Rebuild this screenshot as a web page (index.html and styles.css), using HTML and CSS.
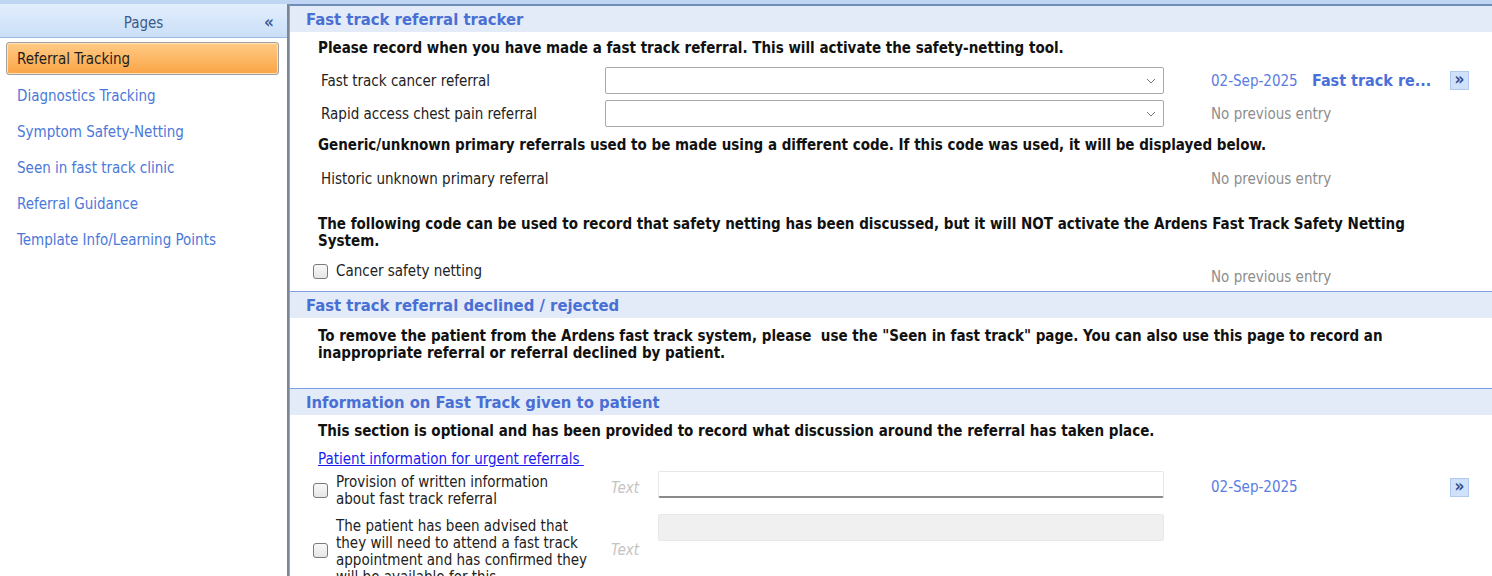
FILE: index.html
```html
<!DOCTYPE html>
<html>
<head>
<meta charset="utf-8">
<link rel="stylesheet" href="styles.css">
</head>
<body>
<div class="app">
  <aside class="sidebar">
    <div class="side-head"><span class="side-title">Pages</span><span class="collapse">&laquo;</span></div>
    <nav class="nav">
      <div class="nav-item active">Referral Tracking</div>
      <div class="nav-item">Diagnostics Tracking</div>
      <div class="nav-item">Symptom Safety-Netting</div>
      <div class="nav-item">Seen in fast track clinic</div>
      <div class="nav-item">Referral Guidance</div>
      <div class="nav-item">Template Info/Learning Points</div>
    </nav>
  </aside>
  <main class="main">
    <section class="section s1">
      <h2 class="sec-head">Fast track referral tracker</h2>
      <p class="note intro">Please record when you have made a fast track referral. This will activate the safety-netting tool.</p>
      <div class="row r1">
        <span class="label">Fast track cancer referral</span>
        <span class="select"><svg class="chev" viewBox="0 0 10 6" width="10" height="6"><path d="M1 1l4 4 4-4" fill="none" stroke="#777" stroke-width="1"/></svg></span>
        <span class="date">02-Sep-2025</span>
        <span class="prev-link">Fast track re...</span>
        <span class="btn">&raquo;</span>
      </div>
      <div class="row r2">
        <span class="label">Rapid access chest pain referral</span>
        <span class="select"><svg class="chev" viewBox="0 0 10 6" width="10" height="6"><path d="M1 1l4 4 4-4" fill="none" stroke="#777" stroke-width="1"/></svg></span>
        <span class="none">No previous entry</span>
      </div>
      <p class="note generic">Generic/unknown primary referrals used to be made using a different code. If this code was used, it will be displayed below.</p>
      <div class="row r3">
        <span class="label">Historic unknown primary referral</span>
        <span class="spacer"></span>
        <span class="none">No previous entry</span>
      </div>
      <p class="note following">The following code can be used to record that safety netting has been discussed, but it will NOT activate the Ardens Fast Track Safety Netting System.</p>
      <div class="row r4">
        <span class="check"></span>
        <span class="clabel">Cancer safety netting</span>
        <span class="none low">No previous entry</span>
      </div>
    </section>
    <section class="section s2">
      <h2 class="sec-head">Fast track referral declined / rejected</h2>
      <p class="note declined">To remove the patient from the Ardens fast track system, please&nbsp; use the "Seen in fast track" page. You can also use this page to record an inappropriate referral or referral declined by patient.</p>
    </section>
    <section class="section s3">
      <h2 class="sec-head">Information on Fast Track given to patient</h2>
      <p class="note optional">This section is optional and has been provided to record what discussion around the referral has taken place.</p>
      <a class="link" href="#">Patient information for urgent referrals&nbsp;</a>
      <div class="irow i1">
        <span class="check"></span>
        <span class="ilabel">Provision of written information about fast track referral</span>
        <span class="ph">Text</span>
        <span class="input"></span>
        <span class="date">02-Sep-2025</span>
        <span class="btn">&raquo;</span>
      </div>
      <div class="irow i2">
        <span class="check"></span>
        <span class="ilabel">The patient has been advised that they will need to attend a fast track appointment and has confirmed they will be available for this</span>
        <span class="ph">Text</span>
        <span class="input disabled"></span>
      </div>
    </section>
  </main>
</div>
</body>
</html>
```
FILE: styles.css
```css
* { box-sizing: border-box; }
html, body { margin: 0; padding: 0; }
body {
  width: 1492px;
  height: 576px;
  overflow: hidden;
  font-family: "DejaVu Sans", "Liberation Sans", sans-serif;
  font-stretch: condensed;
  font-size: 15px;
  color: #1a1a1a;
  background: #ffffff;
}
.app {
  display: flex;
  height: 576px;
  padding-top: 4px;
  background: #bfd5f4;
}
.sidebar {
  width: 289px;
  flex: none;
  background: #ffffff;
  border-right: 2px solid #7c8796;
}
.side-head {
  height: 34px;
  display: flex;
  align-items: center;
  position: relative;
  background: linear-gradient(#e3eefc, #cadff8);
  border-bottom: 1px solid #9cb8e4;
  padding-top: 4px;
}
.side-title {
  flex: 1;
  text-align: center;
  color: #3b5a8c;
  font-size: 15px;
}
.collapse {
  position: absolute;
  right: 13px;
  top: 8px;
  color: #3b5a98;
  font-weight: bold;
  font-size: 17px;
}
.nav { padding: 4px 8px 0 6px; }
.nav-item {
  height: 36px;
  display: flex;
  align-items: center;
  padding-left: 11px;
  color: #4b78d9;
  font-size: 15px;
}
.nav-item.active {
  height: 33px;
  margin-bottom: 3px;
  background: linear-gradient(#ffcb85, #fba445);
  border: 1px solid #a0a0a0;
  border-radius: 3px;
  box-shadow: inset 0 0 0 1px #ffe3b8;
  color: #1d1d1d;
  padding-left: 10px;
}
.main {
  flex: 1;
  background: #ffffff;
  border-top: 2px solid #6f8db8;
  border-left: 1px solid #8ba6d8;
}
.section { border-top: 1px solid #7ea0e0; }
.s1 { border-top: none; height: 285px; }
.s2 { height: 97px; }
.sec-head {
  margin: 0;
  height: 26px;
  line-height: 27px;
  padding-left: 16px;
  background: #e3ebf9;
  color: #4a6fd4;
  font-size: 16.5px;
  font-weight: bold;
}
.note {
  margin: 0;
  padding-left: 28px;
  font-weight: bold;
  font-size: 15px;
  line-height: 17px;
  color: #111;
  padding-right: 60px;
}
.intro { padding-top: 8px; height: 32px; }
.row {
  display: flex;
  align-items: center;
  padding-left: 31px;
  height: 33px;
}
.label { width: 284px; flex: none; color: #222; }
.select {
  width: 559px;
  height: 27px;
  flex: none;
  border: 1px solid #a9a9a9;
  border-radius: 2px;
  display: flex;
  align-items: center;
  justify-content: flex-end;
  padding-right: 7px;
  background: #fff;
}
.spacer { width: 559px; flex: none; }
.date {
  margin-left: 47px;
  color: #5b7ce2;
  width: 101px;
  flex: none;
}
.prev-link {
  color: #4a6fd8;
  font-weight: bold;
  font-size: 16px;
  width: 138px;
  flex: none;
}
.btn {
  width: 19px;
  height: 19px;
  flex: none;
  background: #cfe1fb;
  border: 1px solid #b0c9ee;
  color: #2b4b8c;
  font-weight: bold;
  font-size: 17px;
  line-height: 15px;
  text-align: center;
}
.none {
  margin-left: 47px;
  color: #8d8d8d;
}
.generic { padding-top: 7px; height: 30px; }
.r3 { height: 37px; }
.following { padding-top: 19px; height: 54px; }
.r4 { padding-left: 23px; height: 40px; }
.check {
  width: 15px;
  height: 15px;
  flex: none;
  border: 1px solid #7a7a7a;
  border-radius: 3px;
  background: linear-gradient(#f8f8f8, #e6e6e6);
}
.clabel { margin-left: 8px; width: 853px; flex: none; color: #222; }
.none.low { margin-left: 22px; padding-top: 11px; }
.declined { padding-top: 10px; }
.optional { padding-top: 8px; height: 36px; }
.link {
  display: block;
  margin-left: 28px;
  width: max-content;
  color: #1c1cf0;
  line-height: 17px;
  height: 21px;
}
.irow {
  display: flex;
  align-items: center;
  padding-left: 23px;
}
.i1 { height: 37px; }
.i2 { height: 70px; align-items: flex-start; }
.ilabel {
  width: 255px;
  flex: none;
  margin-left: 8px;
  color: #222;
  line-height: 17px;
}
.ph {
  width: 47px;
  flex: none;
  margin-left: 20px;
  color: #c4c4c4;
  font-style: italic;
  line-height: 17px;
}
.input {
  width: 506px;
  height: 27px;
  flex: none;
  border: 1px solid #e6e6e6;
  border-bottom: 2px solid #8a8a8a;
  border-radius: 2px;
  background: #fff;
}
.input.disabled {
  background: #f0f0f0;
  border: 1px solid #e8e8e8;
}
.i1 .ph { margin-top: -4px; }
.i1 .input { margin-bottom: 12px; }
.i1 .date { margin-left: 47px; width: 239px; margin-bottom: 7px; }
.i1 .btn { margin-bottom: 6px; }
.i2 .check { margin-top: 34px; }
.i2 .ilabel { margin-top: 9px; }
.i2 .ph { margin-top: 33px; }
.i2 .input { margin-top: 5px; }
```
